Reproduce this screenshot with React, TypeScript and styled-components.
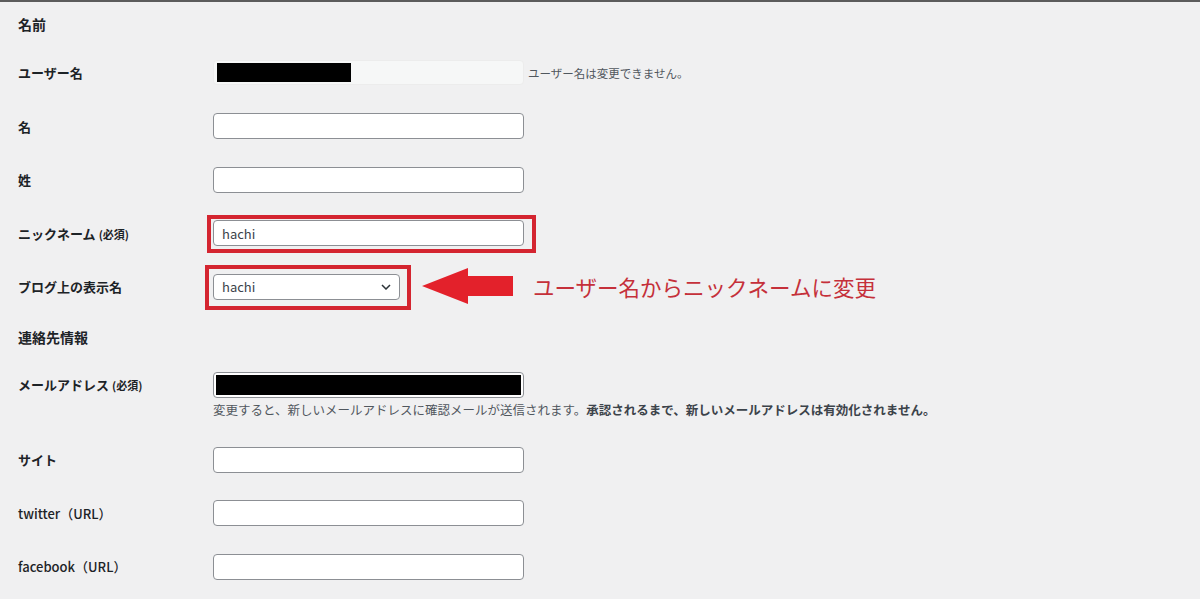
import React from 'react';
import styled, { createGlobalStyle } from 'styled-components';

// WordPress プロフィール画面（名前・連絡先情報）の再現
const GlobalStyle = createGlobalStyle`
  body {
    margin: 0;
    background: #f0f0f1;
    font-family: "Noto Sans CJK JP", "Noto Sans", sans-serif;
    color: #1d2327;
  }
`;

const App: React.FC = () => {
  return (
    <Page>
      <GlobalStyle />
      <SectionTitle $h={44}>名前</SectionTitle>

      <Row>
        <Label>ユーザー名</Label>
        <Field>
          <DisabledInput>
            <Redacted $w={134} $h={19} />
          </DisabledInput>
          <InlineNote>ユーザー名は変更できません。</InlineNote>
        </Field>
      </Row>

      <Row>
        <Label>名</Label>
        <Field>
          <TextInput />
        </Field>
      </Row>

      <Row>
        <Label>姓</Label>
        <Field>
          <TextInput />
        </Field>
      </Row>

      <Row>
        <Label>
          ニックネーム<Required>(必須)</Required>
        </Label>
        <Field>
          <NickFrame>
            <TextInput defaultValue="hachi" />
          </NickFrame>
        </Field>
      </Row>

      <Row>
        <Label>ブログ上の表示名</Label>
        <Field>
          <SelectFrame>
            <SelectBox>
              <span>hachi</span>
              <svg width="10" height="6" viewBox="0 0 10 6">
                <path d="M1 1 L5 5 L9 1" fill="none" stroke="#2c3338" strokeWidth="1.5" />
              </svg>
            </SelectBox>
          </SelectFrame>
          <Arrow width="94" height="40" viewBox="0 0 94 40">
            <polygon points="2,19 48,1 48,9 93,9 93,29 48,29 48,37" fill="#e3212b" />
          </Arrow>
          <Annotation>ユーザー名からニックネームに変更</Annotation>
        </Field>
      </Row>

      <SectionTitle $h={46}>連絡先情報</SectionTitle>

      <MailRow>
        <Label>
          メールアドレス<Required>(必須)</Required>
        </Label>
        <Field $column>
          <MaskedInput>
            <Redacted $w={305} $h={20} />
          </MaskedInput>
          <Description>
            変更すると、新しいメールアドレスに確認メールが送信されます。
            <strong>承認されるまで、新しいメールアドレスは有効化されません。</strong>
          </Description>
        </Field>
      </MailRow>

      <Row>
        <Label>サイト</Label>
        <Field>
          <TextInput />
        </Field>
      </Row>

      <Row>
        <Label $light>twitter（URL）</Label>
        <Field>
          <TextInput />
        </Field>
      </Row>

      <Row>
        <Label $light>facebook（URL）</Label>
        <Field>
          <TextInput />
        </Field>
      </Row>
    </Page>
  );
};

export default App;


const Page = styled.div`
  border-top: 2px solid #5c5c5c;
  padding-left: 18px;
  height: 597px;
  overflow: hidden;
`;

const SectionTitle = styled.h2<{ $h: number }>`
  margin: 0;
  height: ${(p) => p.$h}px;
  display: flex;
  align-items: center;
  font-size: 14px;
  font-weight: 700;
`;

const Row = styled.div`
  display: grid;
  grid-template-columns: 195px 1fr;
  align-items: center;
  height: 53.5px;
`;

const MailRow = styled.div`
  display: grid;
  grid-template-columns: 195px 1fr;
  align-items: start;
  padding: 12.5px 0 15px;
  & > label {
    line-height: 26px;
  }
`;

const Label = styled.label<{ $light?: boolean }>`
  font-size: 13px;
  font-weight: ${(p) => (p.$light ? 500 : 700)};
  white-space: nowrap;
`;

const Required = styled.span`
  font-size: 11px;
  font-weight: 700;
  margin-left: 3px;
`;

const Field = styled.div<{ $column?: boolean }>`
  display: flex;
  flex-direction: ${(p) => (p.$column ? 'column' : 'row')};
  align-items: ${(p) => (p.$column ? 'flex-start' : 'center')};
`;

const TextInput = styled.input`
  box-sizing: border-box;
  width: 311px;
  height: 26px;
  margin: 0;
  padding: 0 8px;
  border: 1px solid #8c8f94;
  border-radius: 4px;
  background: #fff;
  font-family: "Noto Sans CJK JP", sans-serif;
  font-size: 13px;
  font-weight: 400;
  color: #3c434a;
  outline: none;
`;

const DisabledInput = styled.div`
  box-sizing: border-box;
  width: 311px;
  height: 25px;
  padding: 2px 3px;
  border: 1px solid #ececec;
  border-radius: 4px;
  background: #f6f7f7;
`;

const MaskedInput = styled.div`
  box-sizing: border-box;
  width: 311px;
  height: 26px;
  padding: 2px;
  border: 1px solid #8c8f94;
  border-radius: 4px;
  background: #fff;
`;

const Redacted = styled.div<{ $w: number; $h: number }>`
  width: ${(p) => p.$w}px;
  height: ${(p) => p.$h}px;
  background: #000;
`;

const InlineNote = styled.span`
  margin-left: 4px;
  font-size: 11.5px;
  color: #50575e;
`;

const Description = styled.p`
  margin: 4px 0 0;
  font-size: 12.5px;
  line-height: 16px;
  color: #50575e;
  white-space: nowrap;

  strong {
    color: #3c434a;
    font-weight: 700;
  }
`;

const NickFrame = styled.div`
  display: flex;
  border: 4px solid #d42530;
  padding: 1px 8px 3px 2px;
  margin: -5px -12px -7px -6px;
`;

const SelectFrame = styled.div`
  display: flex;
  border: 4px solid #d42530;
  padding: 5px 7px 6px 4px;
  margin: -9px 0 -10px -8px;
`;

const SelectBox = styled.div`
  box-sizing: border-box;
  width: 187px;
  height: 26px;
  padding: 0 8px 0 8px;
  display: flex;
  align-items: center;
  justify-content: space-between;
  border: 1px solid #8c8f94;
  border-radius: 4px;
  background: #fff;
  font-size: 13px;
  color: #3c434a;
`;

const Arrow = styled.svg`
  margin-left: 9px;
  flex-shrink: 0;
`;

const Annotation = styled.span`
  margin-left: 19px;
  font-size: 21.5px;
  color: #c5303a;
  white-space: nowrap;
`;
